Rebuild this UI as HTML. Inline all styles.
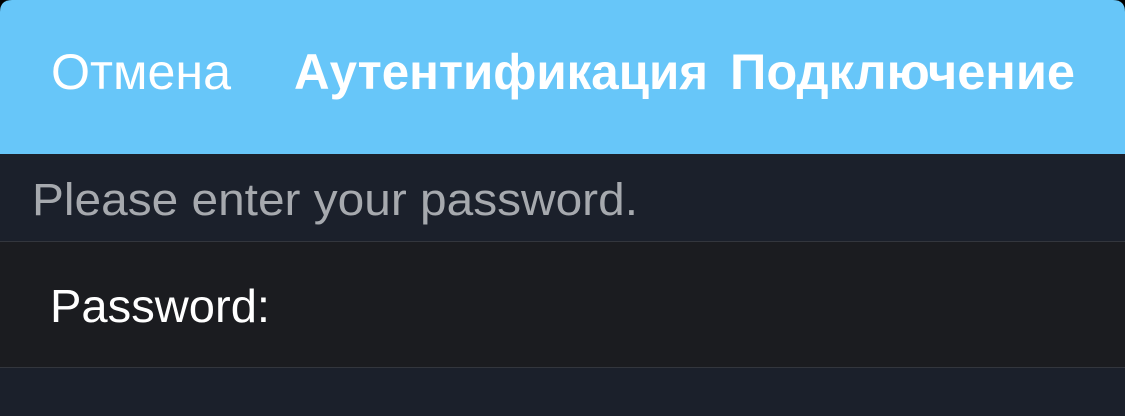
<!DOCTYPE html>
<html><head><meta charset="utf-8"><style>
html,body{margin:0;padding:0;background:#000;width:1125px;height:416px;overflow:hidden}
</style></head><body>
<svg width="1125" height="416" viewBox="0 0 1125 416" xmlns="http://www.w3.org/2000/svg" style="display:block">
<rect x="0" y="0" width="1125" height="416" fill="#000"/>
<path d="M0 12 Q0 0 12 0 L1113 0 Q1125 0 1125 12 L1125 154 L0 154 Z" fill="#67c6f9"/>
<rect x="0" y="154" width="1125" height="87" fill="#1b202b"/>
<rect x="0" y="241" width="1125" height="1" fill="#33363d"/>
<rect x="0" y="242" width="1125" height="125" fill="#1b1c20"/>
<rect x="0" y="367" width="1125" height="1" fill="#33363d"/>
<rect x="0" y="368" width="1125" height="48" fill="#1b202b"/>
<g font-family="Liberation Sans, sans-serif" fill="#fff">
<text x="51" y="89" font-size="50" textLength="180" lengthAdjust="spacingAndGlyphs">Отмена</text>
<text x="294" y="89" font-size="50" font-weight="bold" textLength="414" lengthAdjust="spacingAndGlyphs">Аутентификация</text>
<text x="730" y="89" font-size="50" font-weight="bold" textLength="345" lengthAdjust="spacingAndGlyphs">Подключение</text>
<text x="32" y="215" font-size="45" fill="#a6a9ae" textLength="606" lengthAdjust="spacingAndGlyphs">Please enter your password.</text>
<text x="50" y="322" font-size="46" textLength="220" lengthAdjust="spacingAndGlyphs">Password:</text>
</g>
</svg>
</body></html>
